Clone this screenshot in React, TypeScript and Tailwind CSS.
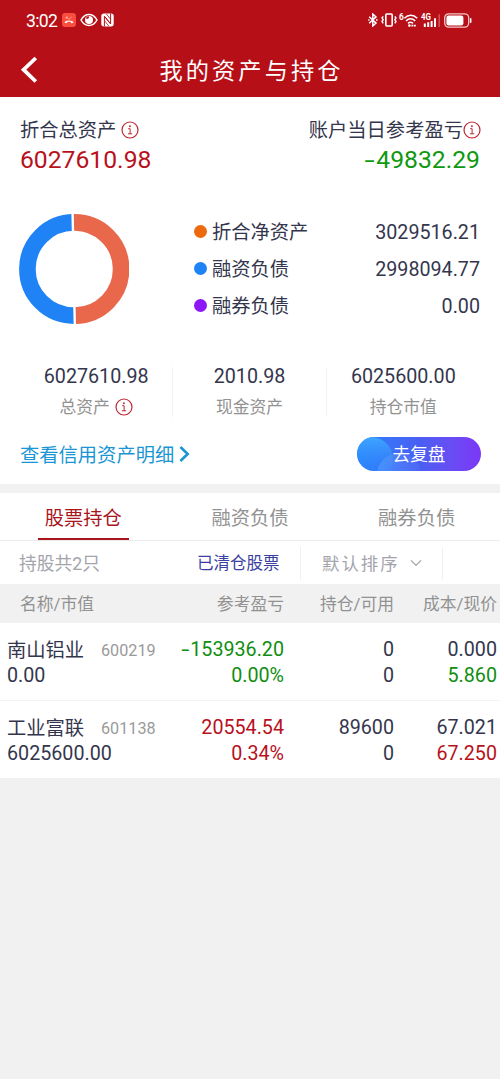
import type { ReactNode } from "react";

const tone = {
  dark: "text-[#34364d]",
  red: "text-[#b8111c]",
  green: "text-[#108e10]",
};

type Tone = keyof typeof tone;

const legend = [
  { label: "折合净资产", value: "3029516.21", dot: "bg-[#ec690c]" },
  { label: "融资负债", value: "2998094.77", dot: "bg-[#1f82f5]" },
  { label: "融券负债", value: "0.00", dot: "bg-[#8e17f7]" },
];

const holdings: {
  name: string;
  code: string;
  marketValue: string;
  profit: string;
  rate: string;
  qty: string;
  available: string;
  cost: string;
  price: string;
  color: Tone;
}[] = [
  {
    name: "南山铝业",
    code: "600219",
    marketValue: "0.00",
    profit: "-153936.20",
    rate: "0.00%",
    qty: "0",
    available: "0",
    cost: "0.000",
    price: "5.860",
    color: "green",
  },
  {
    name: "工业富联",
    code: "601138",
    marketValue: "6025600.00",
    profit: "20554.54",
    rate: "0.34%",
    qty: "89600",
    available: "0",
    cost: "67.021",
    price: "67.250",
    color: "red",
  },
];

function Num({ value }: { value: string }) {
  if (!value.startsWith("-")) return <>{value}</>;
  return (
    <>
      <span className="mr-[0.05em] inline-block origin-right scale-x-150">-</span>
      {value.slice(1)}
    </>
  );
}

function InfoIcon() {
  return (
    <svg width="18" height="18" viewBox="0 0 18 18" fill="none" stroke="#bd2630" className="shrink-0">
      <circle cx="9" cy="9" r="8" strokeWidth="1.2" />
      <circle cx="8.9" cy="5.2" r="0.95" fill="#bd2630" stroke="none" />
      <path d="M7.2 7.7h1.9v5M6.9 12.8h4.3" strokeWidth="1" />
    </svg>
  );
}

function StatusBar() {
  return (
    <div className="flex h-10 items-center justify-between pl-[26px] pr-[28px] text-white">
      <div className="flex items-center">
        <span className="w-9 pt-px text-[17.6px] leading-5 tracking-[-0.7px]">3:02</span>
        <svg width="14" height="14" viewBox="0 0 14 14">
          <rect width="14" height="14" rx="3" fill="#f94d3d" />
          <path d="M2.6 9.8c0-3 8.8-3 8.8 0l-2.2.5-.5-1.6H5.3l-.5 1.6z" fill="#fff" />
          <path d="M4.3 4.2l2.6 2 2.8-2.3M4.2 6V4h1.9" fill="none" stroke="#ffb0a4" strokeWidth="0.8" />
        </svg>
        <svg width="18" height="14" viewBox="0 0 18 14" className="ml-1">
          <path d="M1 7c4-7.4 12-7.4 16 0-4 7.4-12 7.4-16 0z" fill="none" stroke="#fff" strokeWidth="1.5" />
          <circle cx="9" cy="6.9" r="4" fill="#fff" />
          <path d="M6 5.6a2.6 2.6 0 0 1 3-2.2 2 2 0 0 1-3 2.2z" fill="#b60f17" />
        </svg>
        <svg width="13" height="14" viewBox="0 0 13 14" className="ml-[3px]">
          <rect x="0.3" y="0.6" width="12.4" height="12.8" rx="2.6" fill="#fff" />
          <path d="M3.4 13.5V3.4l6 7.4M9.6.5v10.2L3.6 3.4" fill="none" stroke="#b60f17" strokeWidth="1" />
          <path d="M5.4 1l4.2 5.2M3.4 7.6l4.4 5.4" stroke="#b60f17" strokeWidth="0.8" />
        </svg>
      </div>
      <div className="flex items-center">
        <svg width="10" height="14" viewBox="0 0 10 14" fill="none" stroke="#fff" strokeWidth="1.5">
          <path d="M1.2 3.8l6.8 6.3L4.8 13V1L8 3.9l-6.8 6.3" />
          <path d="M.2 7h1.4M8 7h1.6" />
        </svg>
        <svg width="16" height="14" viewBox="0 0 16 14" fill="none" stroke="#fff" className="ml-[3px]">
          <rect x="4.8" y="1" width="6.4" height="12" rx="1" strokeWidth="1.6" />
          <path d="M2.2 3.4L1 5l1.2 1.7L1 8.5l1.2 1.8M13.8 3.4L15 5l-1.2 1.7L15 8.5l-1.2 1.8" strokeWidth="1.4" />
        </svg>
        <svg width="19" height="15" viewBox="0 0 19 15" fill="none" stroke="#fff" className="ml-[2px]">
          <text x="0" y="7" fontSize="8.4" fontWeight="700" fill="#fff" stroke="none">
            6
          </text>
          <path d="M5.4 5.2c3.7-3.9 9.1-3.9 12.8 0M7 7.9c2.8-2.7 6.4-2.7 9.2 0M9 10.4c1.5-1.4 3.5-1.4 5 0" strokeWidth="1.5" />
          <circle cx="10.4" cy="12.6" r="1.3" fill="#fff" stroke="none" />
          <path d="M12.4 12.6h4.4" strokeWidth="1.9" strokeDasharray="1.9 .6" />
        </svg>
        <svg width="20" height="15" viewBox="0 0 20 15" className="ml-[3px]">
          <text x="0" y="7" fontSize="8.2" fontWeight="700" fill="#fff" textLength="10" lengthAdjust="spacingAndGlyphs">
            4G
          </text>
          <path d="M3.8 14v-3.6M7.2 14V9.2M10.6 14V8M14 14V5.2" stroke="#fff" strokeWidth="2" />
          <path d="M18.2 14V1.2" stroke="#d45a60" strokeWidth="1.4" />
        </svg>
        <svg width="28" height="15" viewBox="0 0 28 15" className="ml-[3px]">
          <rect x="0.7" y="0.9" width="24" height="13.2" rx="4" fill="none" stroke="#f3c9ca" strokeWidth="1.3" />
          <rect x="2.4" y="2.6" width="17" height="9.8" rx="2.2" fill="#fff" />
          <path d="M26.7 5.8v3.4" stroke="#fff" strokeWidth="1.5" strokeLinecap="round" />
        </svg>
      </div>
    </div>
  );
}

function TitleBar() {
  return (
    <div className="grid h-[57px] grid-cols-[80px_1fr_80px] items-center text-white">
      <svg width="18" height="28" viewBox="0 0 18 28" fill="none" stroke="#fff" strokeWidth="3.8" className="ml-5 mt-[3px]">
        <path d="M15.8 2L3.6 13.7l12.2 11.8" />
      </svg>
      <h1 className="whitespace-nowrap pl-[3px] pt-1 text-center text-[23.2px] leading-8 tracking-[3.1px]">我的资产与持仓</h1>
    </div>
  );
}

function Donut() {
  return (
    <svg width="110" height="110" viewBox="0 0 110 110" fill="none" strokeWidth="16.6" className="mt-px shrink-0">
      <path d="M55 8.4a46.6 46.6 0 0 0 0 93.2" stroke="#1f82f5" />
      <path d="M54 8.4h1a46.6 46.6 0 0 1 1 93.2h-1" stroke="#e9674a" />
      <path d="M53.6 0L54 18M55.4 92l.4 18" stroke="#fff" strokeWidth="2.4" />
    </svg>
  );
}

function Stat({ value, label, info }: { value: string; label: ReactNode; info?: boolean }) {
  return (
    <div className="flex flex-col items-center">
      <span className="text-[19.7px] leading-5 text-[#34364d]">{value}</span>
      <span className="mt-[10px] flex h-5 items-center gap-[5px] text-[16.8px] leading-5 text-[#929292]">
        {label}
        {info && <InfoIcon />}
      </span>
    </div>
  );
}

function Summary() {
  return (
    <section className="h-[387px] bg-white px-5 pt-[22px]">
      <div className="flex justify-between text-[19.3px] leading-6 text-[#34364d]">
        <div>
          <div className="flex h-[22px] items-center gap-[5px]">
            <span className="pt-[2px]">折合总资产</span>
            <InfoIcon />
          </div>
          <div className="mt-[5px] text-[24.7px] leading-7 text-[#b8111c]">6027610.98</div>
        </div>
        <div className="-mr-px text-right">
          <div className="flex h-[22px] items-center">
            <span className="pt-[2px]">账户当日参考盈亏</span>
            <InfoIcon />
          </div>
          <div className="mt-[5px] pr-px text-[24.7px] leading-7 text-[#0f990f]">
            <Num value="-49832.29" />
          </div>
        </div>
      </div>

      <div className="-ml-px mt-[39px] flex items-center">
        <Donut />
        <ul className="ml-[65px] flex-1 text-[19.3px] text-[#34364d]">
          {legend.map((item) => (
            <li key={item.label} className="flex h-[37px] items-center">
              <span className={`mr-[5px] size-[13px] rounded-full ${item.dot}`} />
              <span className="pt-[3px]">{item.label}</span>
              <span className="ml-auto pt-[2px] text-[19.7px]">{item.value}</span>
            </li>
          ))}
        </ul>
      </div>

      <div className="mt-[43px] grid grid-cols-3 divide-x divide-[#f3f3f3]">
        <Stat value="6027610.98" label="总资产" info />
        <Stat value="2010.98" label="现金资产" />
        <Stat value="6025600.00" label="持仓市值" />
      </div>

      <div className="mt-5 flex items-center justify-between">
        <a className="flex items-center text-[19.3px] leading-6 text-[#1b96d4]">
          <span className="pt-[3px]">查看信用资产明细</span>
          <svg width="13" height="18" viewBox="0 0 13 18" fill="none" stroke="currentColor" strokeWidth="2.6" className="ml-1">
            <path d="M2.4 2l7.3 7-7.3 7" />
          </svg>
        </a>
        <button className="relative -mr-px h-[34px] w-[124px] overflow-hidden rounded-full bg-linear-to-r from-[#2384fb] via-[#485ff3] to-[#7c36f6] text-[17.7px] leading-[36px] text-white">
          <svg width="124" height="34" viewBox="0 0 124 34" className="absolute inset-0">
            <defs>
              <linearGradient id="bubble" x1="0" y1="0" x2="0" y2="1">
                <stop offset="0" stopColor="#3fa6ff" />
                <stop offset="0.8" stopColor="#2b86fd" stopOpacity="0.2" />
              </linearGradient>
              <linearGradient id="bubbleSmall" x1="0" y1="0" x2="1" y2="0">
                <stop offset="0" stopColor="#55a2ff" stopOpacity="0.55" />
                <stop offset="1" stopColor="#6a86ff" stopOpacity="0.15" />
              </linearGradient>
            </defs>
            <circle cx="14" cy="22" r="22" fill="url(#bubble)" />
            <circle cx="42" cy="38" r="22" fill="url(#bubbleSmall)" />
          </svg>
          <span className="relative">去复盘</span>
        </button>
      </div>
    </section>
  );
}

function Tabs() {
  return (
    <nav className="grid h-12 grid-cols-3 border-b border-[#ececec] bg-white text-center text-[19.3px] leading-[43px] text-[#929292]">
      <div className="relative h-[47px] pt-1 text-[#a9141d]">
        股票持仓
        <span className="absolute bottom-0 left-[38px] h-[2.5px] w-[91px] bg-[#a9141d]" />
      </div>
      <div className="pt-1">融资负债</div>
      <div className="pt-1">融券负债</div>
    </nav>
  );
}

function Filters() {
  return (
    <div className="flex h-[43px] items-center bg-white pt-px text-[#a3a4ac]">
      <span className="w-[197px] pl-[19px] pt-[2px] text-[17.8px]">持股共2只</span>
      <span className="w-[103px] pt-[2px] text-[16.5px] text-[#3b3f9f]">已清仓股票</span>
      <div className="flex h-[33px] w-[143px] items-center border-x border-[#f0f0f0] pl-[21px]">
        <span className="pt-[2px] text-[17.4px] tracking-[2px]">默认排序</span>
        <svg width="12" height="8" viewBox="0 0 12 8" fill="none" stroke="#a0a0a0" strokeWidth="1.2" className="ml-[10px]">
          <path d="M1 1.4l5 5 5-5" />
        </svg>
      </div>
    </div>
  );
}

const columns = "grid grid-cols-[153px_131px_110px_103px]";

function Holdings() {
  return (
    <section>
      <div className={`${columns} h-[39px] items-center bg-[#f1f1f1] pt-[3px] text-right text-[16.8px] text-[#929292]`}>
        <span className="pl-5 text-left">名称/市值</span>
        <span>参考盈亏</span>
        <span>持仓/可用</span>
        <span>成本/现价</span>
      </div>
      {holdings.map((row) => (
        <div
          key={row.code}
          className={`${columns} h-[78px] border-b border-[#f3f3f3] bg-white pt-[14px] text-right text-[19.7px] leading-[26px] text-[#34364d] last:h-[77px] last:border-0`}
        >
          <div className="whitespace-nowrap pl-[7px] text-left">
            <div className="flex h-[26px] items-center">
              <span className="w-[94px] shrink-0 pt-px text-[19.3px]">{row.name}</span>
              <span className="pt-[2px] text-[16.2px] text-[#9a9a9a]">{row.code}</span>
            </div>
            <div>{row.marketValue}</div>
          </div>
          <div className={tone[row.color]}>
            <div>
              <Num value={row.profit} />
            </div>
            <div>{row.rate}</div>
          </div>
          <div>
            <div>{row.qty}</div>
            <div>{row.available}</div>
          </div>
          <div>
            <div>{row.cost}</div>
            <div className={tone[row.color]}>{row.price}</div>
          </div>
        </div>
      ))}
    </section>
  );
}

export default function App() {
  return (
    <main className="min-h-screen w-full bg-[#f1f1f1] [font-family:Roboto,'Noto_Sans_CJK_SC',sans-serif]">
      <header className="h-[97px] bg-[#b60f17]">
        <StatusBar />
        <TitleBar />
      </header>
      <Summary />
      <div className="h-[9px]" />
      <Tabs />
      <Filters />
      <Holdings />
    </main>
  );
}
